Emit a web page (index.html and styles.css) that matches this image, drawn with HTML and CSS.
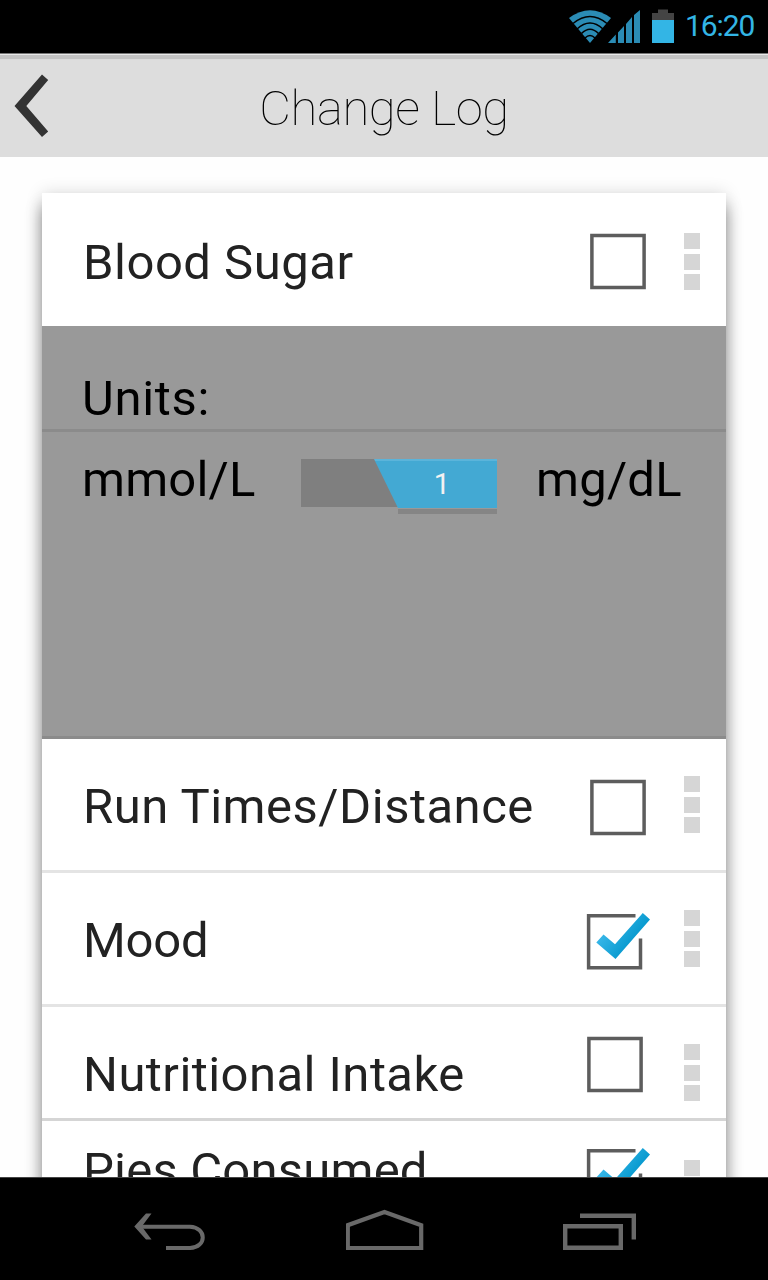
FILE: index.html
```html
<!DOCTYPE html>
<html lang="en">
<head>
<meta charset="utf-8">
<title>Change Log</title>
<link rel="stylesheet" href="styles.css">
</head>
<body>
<svg width="0" height="0" class="defs" aria-hidden="true">
  <defs>
    <linearGradient id="tick" x1="0" y1="0.3" x2="0.6" y2="0.7">
      <stop offset="0" stop-color="#45bff0"/>
      <stop offset="1" stop-color="#0a9bd0"/>
    </linearGradient>
    <symbol id="box" viewBox="0 0 66 60">
      <path d="M4.900 5.400H57.100V57.400H4.900Z" fill="none" stroke="#5d5d5d" stroke-width="3.5"/>
    </symbol>
    <symbol id="box-checked" viewBox="0 0 66 60">
      <path d="M51.5 5.800H4.600V57.700H56.500V28.5" fill="none" stroke="#5d5d5d" stroke-width="3.5"/>
      <path d="M12.3 32.5L19.5 24.5L31 34.3L58.8 3L66 9.5L31.5 49Z" fill="url(#tick)"/>
    </symbol>
  </defs>
</svg>
<div class="phone">
  <header class="status">
    <svg class="status-icons" width="110" height="36" viewBox="0 0 110 36">
      <g fill="#2b8cb5">
        <path d="M1 10Q22 -5.500 43 10L22 35Z"/>
        <g fill="none" stroke="#000" stroke-width="1.600">
          <path d="M5 15.500Q22 1.500 39 15.500M9 21Q22 9 35 21M13.500 25.500Q22 17 30.500 25.500M17 30Q22 25 27 30"/>
        </g>
        <path d="M40 35L47.800 26.500V35ZM50 24.500L56 18V35H50ZM58 16L64 9V35H58ZM66 7L72 2V35H66Z"/>
      </g>
      <path d="M84 12V5H90V1.500H100V5H106V12Z" fill="#444"/>
      <path d="M84 12H106V35H84Z" fill="#33b5e5"/>
    </svg>
    <span class="clock">16:20</span>
  </header>

  <div class="titlebar">
    <svg class="back" width="36" height="64" viewBox="0 0 36 64">
      <path d="M28 0.500L34.200 6L12.300 32L34.200 57.500L28 63L0.500 32Z" fill="#333"/>
    </svg>
    <h1 class="title">Change Log</h1>
  </div>

  <main class="content">
    <section class="card">
      <div class="row row-first">
        <span class="label">Blood Sugar</span>
        <svg class="check"><use href="#box"/></svg>
        <span class="grip"><i></i><i></i><i></i></span>
      </div>
      <div class="panel">
        <div class="panel-title">Units:</div>
        <div class="units">
          <span class="unit unit-left">mmol/L</span>
          <div class="switch"><span class="thumb">1</span></div>
          <span class="unit unit-right">mg/dL</span>
        </div>
      </div>
      <div class="row">
        <span class="label">Run Times/Distance</span>
        <svg class="check"><use href="#box"/></svg>
        <span class="grip"><i></i><i></i><i></i></span>
      </div>
      <div class="row row-mood">
        <span class="label">Mood</span>
        <svg class="check"><use href="#box-checked"/></svg>
        <span class="grip"><i></i><i></i><i></i></span>
      </div>
      <div class="row row-food">
        <span class="label">Nutritional Intake</span>
        <svg class="check"><use href="#box"/></svg>
        <span class="grip"><i></i><i></i><i></i></span>
      </div>
      <div class="row row-pies">
        <span class="label">Pies Consumed</span>
        <svg class="check"><use href="#box-checked"/></svg>
        <span class="grip"><i></i><i></i><i></i></span>
      </div>
    </section>
  </main>

  <nav class="navbar">
    <svg width="72" height="40" viewBox="0 0 72 40">
      <path d="M4 16.800H56C73 17.500 73 37.500 56 38H32" fill="none" stroke="#696969" stroke-width="4"/>
      <path d="M0.300 16.500L12 3.500H17.500L7.800 16.500L17.500 29.500H12Z" fill="#696969"/>
    </svg>
    <svg width="78" height="42" viewBox="0 0 78 42">
      <path d="M1.800 39V16.200L38.500 3L75.200 16.200V39Z" fill="none" stroke="#696969" stroke-width="4.200"/>
    </svg>
    <svg width="74" height="38" viewBox="0 0 74 38">
      <g fill="none" stroke="#696969" stroke-width="4.400">
        <path d="M2.200 13.300H57.800V34.700H2.200Z"/>
        <path d="M17 2.800H70.800V26.500"/>
      </g>
    </svg>
  </nav>
</div>
</body>
</html>
```

FILE: styles.css
```css
* { box-sizing: border-box; }
body {
  margin: 0;
  font-family: Roboto, "Liberation Sans", sans-serif;
  background: #fefefe;
}
.defs { position: absolute; }
svg { display: block; flex: none; }
.phone {
  width: 768px;
  height: 1280px;
  display: flex;
  flex-direction: column;
  overflow: hidden;
}

.status {
  flex: none;
  height: 53px;
  background: #000;
  display: flex;
  justify-content: flex-end;
  padding: 8px 13px 0 0;
}
.status-icons { margin-right: 7px; }
.clock {
  font-size: 30px;
  line-height: 36px;
  color: #33b5e5;
  width: 70px;
  letter-spacing: -1.1px;
  white-space: nowrap;
}

.titlebar {
  flex: none;
  height: 104px;
  border-top: 1px solid #777;
  background: linear-gradient(#e9e9e9 0 1px, #c4c4c4 1px 5px, #ddd 5px);
  display: grid;
  grid-template-columns: 48px 1fr 48px;
  align-items: start;
}
.back { margin: 20px 0 0 14px; }
.title {
  margin: 27px 0 0;
  font-size: 49px;
  line-height: 56px;
  font-weight: 100;
  letter-spacing: -0.4px;
  text-align: center;
  color: #000;
}

.content {
  flex: none;
  height: 1020px;
  padding: 36px 42px 0;
  overflow: hidden;
}
.card {
  height: 1060px;
  background: #fff;
  box-shadow: 0 0 16px rgba(0, 0, 0, 0.14), 0 14px 15px rgba(0, 0, 0, 0.42);
}
.row {
  display: flex;
  align-items: flex-start;
  height: 134px;
  padding: 0 26px 0 41px;
  border-bottom: 3px solid #e4e4e4;
}
.label {
  flex: 1;
  margin-top: 40px;
  font-size: 49px;
  line-height: 56px;
  letter-spacing: 0.5px;
  color: #222;
  white-space: nowrap;
}
.check {
  width: 66px;
  height: 60px;
  margin: 37px 31px 0 0;
}
.grip {
  display: grid;
  gap: 4.7px;
  margin-top: 37px;
}
.grip i {
  width: 16px;
  height: 16px;
  background: #d6d6d6;
}
.row-first { height: 133px; border: 0; }
.row-first .label { margin-top: 42px; }
.row-first .grip { margin-top: 40px; }
.row-mood .label { letter-spacing: -0.2px; }
.row-mood .check { margin-right: 34px; }
.row-food { height: 114px; border-color: #d5d5d5; }
.row-food .label { letter-spacing: 0.45px; }
.row-food .check { margin: 26px 34.500px 0 0; }
.row-pies .label { margin-top: 22px; letter-spacing: 0.2px; }
.row-pies .check { margin: 24px 34px 0 0; }
.row-pies .grip { margin-top: 39px; }

.panel {
  height: 413px;
  background: #999;
  border-bottom: 3px solid #8b8b8b;
  color: #000;
}
.panel-title {
  height: 106px;
  padding: 45px 0 0 40px;
  border-bottom: 3px solid #8b8b8b;
  font-size: 49px;
  line-height: 56px;
  letter-spacing: 0.7px;
}
.units {
  display: flex;
  align-items: flex-start;
  padding: 19px 0 0 40px;
}
.unit {
  margin-top: 1px;
  font-size: 49px;
  line-height: 56px;
  letter-spacing: 0.2px;
  white-space: nowrap;
}
.unit-left { width: 219px; }
.switch {
  width: 196px;
  height: 48px;
  margin: 8px 39px 0 0;
  background: #7f7f7f;
  position: relative;
}
.switch::after {
  content: "";
  position: absolute;
  right: 0;
  bottom: -7px;
  width: 99px;
  height: 5px;
  background: #858585;
}
.thumb {
  display: block;
  height: 49px;
  margin-left: 73px;
  padding-left: 13px;
  clip-path: polygon(0 0, 100% 0, 100% 100%, 24px 100%);
  background: linear-gradient(#5bb4da 0 2px, #43a9d3 2px);
  color: #f2f2f2;
  font-size: 29px;
  line-height: 50px;
  text-align: center;
}

.navbar {
  flex: 1;
  background: #000;
  border-top: 1px solid #444;
  display: flex;
  justify-content: space-between;
  align-items: flex-start;
  padding: 31px 131px 0 134px;
}
.navbar svg:first-child { margin-top: 1px; }
.navbar svg:last-child { margin-top: 4px; }
```
